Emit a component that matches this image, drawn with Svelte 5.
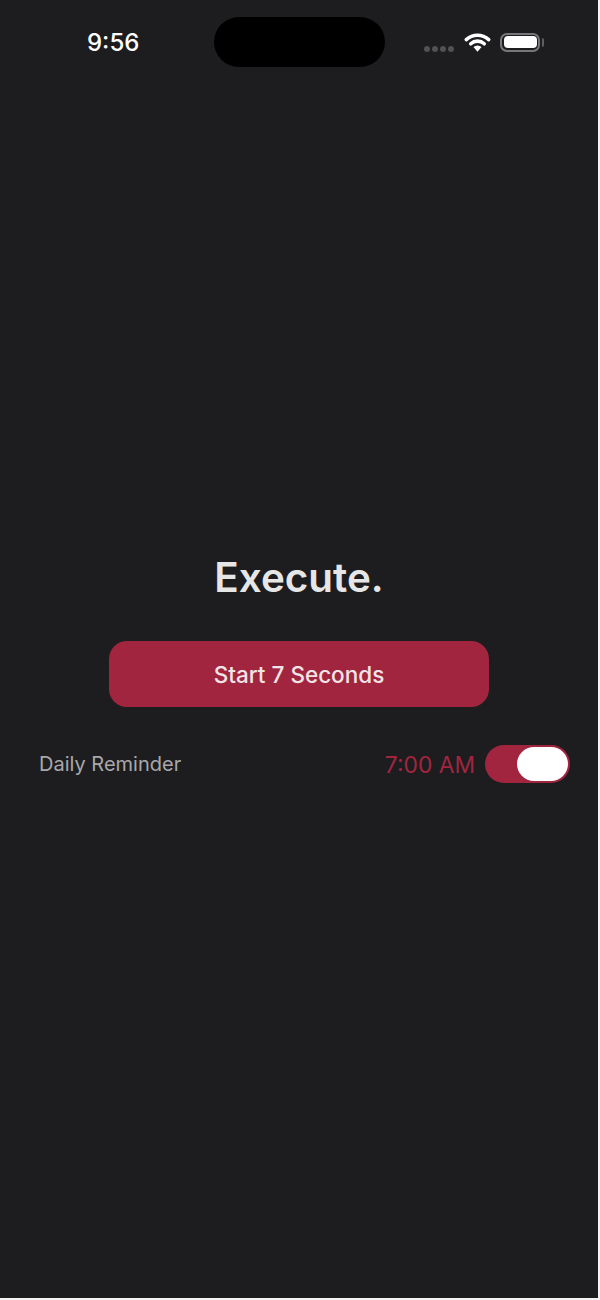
<script>
  let reminderOn = $state(true);
</script>

<div class="screen">
  <header class="status">
    <span class="time">9:56</span>
    <div class="island"></div>
    <div class="indicators">
      <div class="dots"><i></i><i></i><i></i><i></i></div>
      <svg class="wifi" viewBox="0 0 26 19" width="27" height="20">
        <path d="M2.2 7.200A16 16 0 0 1 23.800 7.200" fill="none" stroke="#fff" stroke-width="3.400" stroke-linecap="round" />
        <path d="M6.500 11.200a9.600 9.600 0 0 1 13 0" fill="none" stroke="#fff" stroke-width="3.400" stroke-linecap="round" />
        <path d="M13 18.800l-3.900-4.400a5.600 5.600 0 0 1 7.800 0z" fill="#fff" />
      </svg>
      <div class="battery"><div class="level"></div></div>
    </div>
  </header>

  <main class="content">
    <h1>Execute.</h1>
    <button class="start">Start 7 Seconds</button>
    <div class="reminder">
      <span class="label">Daily Reminder</span>
      <div class="right">
        <span class="at">7:00 AM</span>
        <button class="toggle" class:on={reminderOn} onclick={() => (reminderOn = !reminderOn)} aria-label="Daily Reminder"><span class="knob"></span></button>
      </div>
    </div>
  </main>
</div>

<style>
  :global(body) {
    background: #f4f4f4;
    font-family: Inter, "Liberation Sans", sans-serif;
  }

  .screen {
    width: 598px;
    height: 1298px;
    background: #1d1d1f;
    overflow: hidden;
  }

  .status {
    height: 50px;
    padding-top: 17px;
    display: flex;
    align-items: center;
    color: #fff;
  }

  .time {
    width: 214px;
    padding-left: 87px;
    box-sizing: border-box;
    font-size: 24px;
    font-weight: 500;
  }

  .island {
    width: 171px;
    height: 50px;
    border-radius: 25px;
    background: #000;
  }

  .indicators {
    display: flex;
    align-items: center;
    margin-left: 39px;
  }

  .dots {
    display: flex;
    gap: 2px;
    margin-top: 13px;
    margin-right: 10px;
  }

  .dots i {
    width: 6px;
    height: 6px;
    border-radius: 50%;
    background: #515154;
  }

  .wifi {
    margin-right: 9px;
  }

  .battery {
    position: relative;
    width: 40px;
    height: 19px;
    box-sizing: border-box;
    padding: 1.5px;
    border: 2px solid #77777a;
    border-radius: 7px;
  }

  .battery::after {
    content: "";
    position: absolute;
    right: -6px;
    top: 3px;
    width: 2px;
    height: 9px;
    background: #5f5f62;
    border-radius: 0 2px 2px 0;
  }

  .level {
    height: 100%;
    background: #fff;
    border-radius: 4px;
  }

  .content {
    display: flex;
    flex-direction: column;
    align-items: center;
    padding-top: 487px;
  }

  h1 {
    margin: 0;
    font-size: 40.4px;
    line-height: 48px;
    font-weight: 600;
    color: #e6e6e6;
  }

  .start {
    margin-top: 39px;
    width: 380px;
    height: 66px;
    border: none;
    border-radius: 18px;
    background: #a2253f;
    color: #f1e4e6;
    font: 500 22.5px Inter, "Liberation Sans", sans-serif;
  }

  .reminder {
    align-self: stretch;
    margin-top: 38px;
    padding: 0 28px 0 39px;
    display: flex;
    justify-content: space-between;
    align-items: center;
  }

  .label {
    font-size: 20px;
    color: #a8a8aa;
  }

  .right {
    display: flex;
    align-items: center;
    gap: 10px;
  }

  .at {
    font-size: 22.8px;
    color: #a2253f;
  }

  .toggle {
    display: flex;
    justify-content: flex-start;
    width: 85px;
    height: 38px;
    padding: 2px;
    border: none;
    border-radius: 19px;
    background: #a2253f;
  }

  .toggle.on {
    justify-content: flex-end;
  }

  .knob {
    width: 51px;
    height: 34px;
    border-radius: 17px;
    background: #fff;
  }
</style>
